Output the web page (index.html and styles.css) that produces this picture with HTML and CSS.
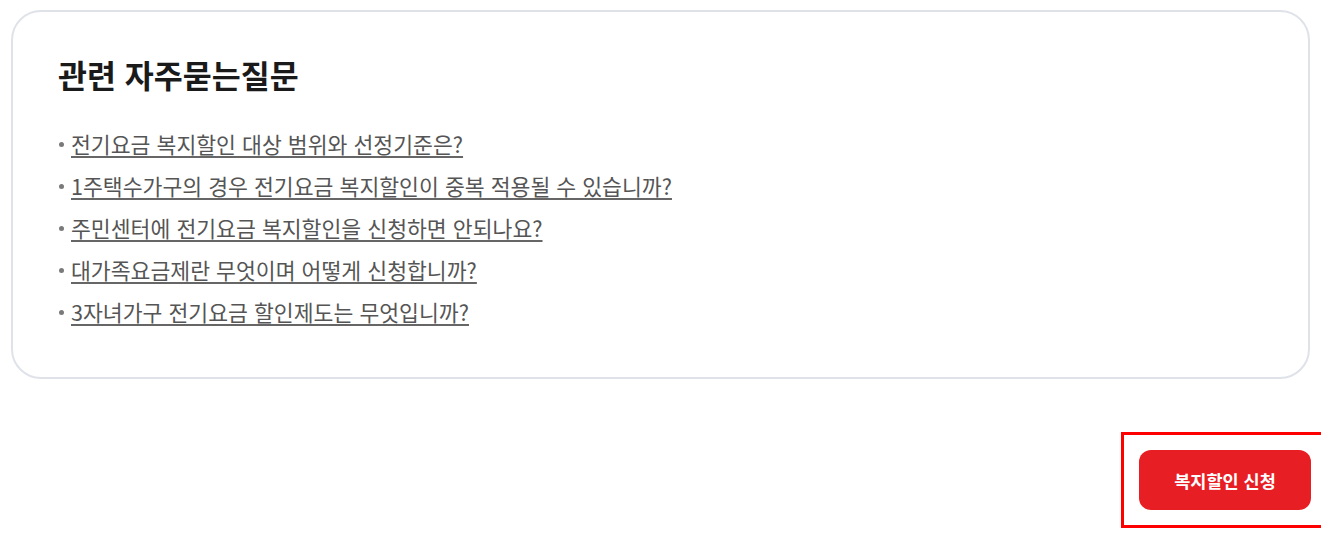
FILE: index.html
```html
<!DOCTYPE html>
<html lang="ko">
<head>
<meta charset="utf-8">
<link rel="stylesheet" href="styles.css">
</head>
<body>
<div class="page">
  <section class="faq-card">
    <h2 class="faq-title">관련 자주묻는질문</h2>
    <ul class="faq-list">
      <li><a href="#">전기요금 복지할인 대상 범위와 선정기준은?</a></li>
      <li><a href="#">1주택수가구의 경우 전기요금 복지할인이 중복 적용될 수 있습니까?</a></li>
      <li><a href="#">주민센터에 전기요금 복지할인을 신청하면 안되나요?</a></li>
      <li><a href="#">대가족요금제란 무엇이며 어떻게 신청합니까?</a></li>
      <li><a href="#">3자녀가구 전기요금 할인제도는 무엇입니까?</a></li>
    </ul>
  </section>
  <div class="actions">
    <div class="focus-wrap">
      <button class="apply-btn" type="button">복지할인 신청</button>
    </div>
  </div>
</div>
</body>
</html>
```
FILE: styles.css
```css
html {
  overflow: hidden;
}
html, body {
  margin: 0;
  padding: 0;
  background: #fff;
}
body {
  font-family: "Noto Sans CJK KR", "Noto Sans", sans-serif;
  color: #222;
  min-height: 550px;
}
.page {
  padding: 10px 11px 0 11px;
}
.faq-card {
  border: 2px solid #dfe3e9;
  border-radius: 30px;
  padding: 40px 45px 42px 45px;
  height: 369px;
  box-sizing: border-box;
}
.faq-title {
  margin: 0;
  font-size: 31.5px;
  font-weight: 700;
  line-height: 44px;
  color: #1a1a1a;
  letter-spacing: 0;
}
.faq-list {
  list-style: none;
  margin: 26px 0 0 0;
  padding: 0;
}
.faq-list li {
  display: flex;
  align-items: center;
  height: 42px;
  font-size: 21.6px;
  color: #5a5a5a;
}
.faq-list li::before {
  content: "";
  width: 5px;
  height: 5px;
  border-radius: 50%;
  background: #7a7a7a;
  flex: none;
  margin: 2px 7px 0 1px;
}
.faq-list a {
  color: #555;
  text-decoration: underline;
  text-decoration-color: #666;
  text-underline-offset: 3px;
  text-decoration-thickness: 2px;
  letter-spacing: 0;
}
.actions {
  display: flex;
  justify-content: flex-end;
  padding-top: 71px;
  margin-right: -1px;
}
.focus-wrap {
  position: relative;
}
.focus-wrap::after {
  content: "";
  position: absolute;
  top: -18px;
  left: -18px;
  right: -18px;
  bottom: -18px;
  border: 3px solid #ff0000;
  pointer-events: none;
}
.apply-btn {
  display: block;
  width: 172px;
  height: 60px;
  border: 0;
  border-radius: 12px;
  background: #e81e25;
  color: #fff;
  font-family: "Noto Sans CJK KR", "Noto Sans", sans-serif;
  font-size: 17.5px;
  font-weight: 700;
  outline: none;
  cursor: pointer;
}
```
